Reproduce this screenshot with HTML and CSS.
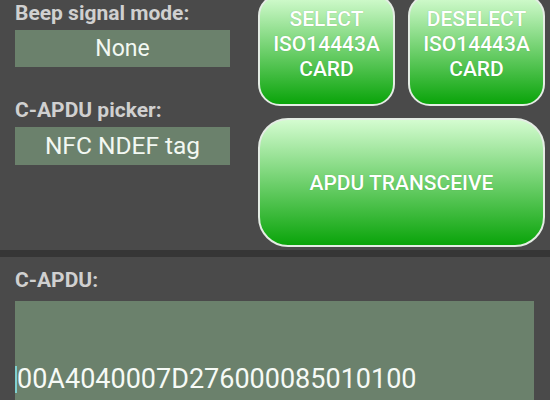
FILE: index.html
```html
<!DOCTYPE html>
<html lang="en">
<head>
  <meta charset="UTF-8">
  <title>APDU</title>
  <link rel="stylesheet" href="styles.css">
</head>
<body>

  <!-- parte de cima: modos + botoes -->
  <div class="top">
    <div class="left">
      <div class="label">Beep signal mode:</div>
      <div class="picker picker-beep">None</div>
      <div class="label label-second">C-APDU picker:</div>
      <div class="picker picker-apdu">NFC NDEF tag</div>
    </div>
    <div class="right">
      <button class="btn btn-small">SELECT<br>ISO14443A<br>CARD</button>
      <button class="btn btn-small">DESELECT<br>ISO14443A<br>CARD</button>
      <button class="btn btn-big">APDU TRANSCEIVE</button>
    </div>
  </div>

  <div class="divider"></div>

  <!-- parte de baixo: campo do comando -->
  <div class="bottom">
    <div class="label">C-APDU:</div>
    <div class="apdu-box">
      <span class="caret"></span>00A4040007D276000085010100
    </div>
  </div>

</body>
</html>
```

FILE: styles.css
```css
*,*::before,*::after{margin:0;padding:0;box-sizing:border-box}
html,body{
  width:100%;height:100%;
  overflow:hidden;
  background:#4a4a4a;
  font-family:Roboto,"Liberation Sans",sans-serif;
}

/* ===== TOPO ===== */
.top{
  display:flex;
  height:250px;
  overflow:hidden;
}
.left{
  width:215px;
  margin-left:15px;
}
.label{
  color:#d0d0d0;
  font-size:21px;
  font-weight:700;
  line-height:26px;
}
.label-second{margin-top:30px}
.picker{
  margin-top:4px;
  background:#6b816c;
  color:#f2f8f2;
  text-align:center;
  overflow:hidden;
}
.picker-beep{
  height:37px;
  font-size:23px;
  line-height:37px;
}
.picker-apdu{
  height:38px;
  font-size:24.5px;
  line-height:38px;
}

.right{
  margin-left:28px;
  width:287px;
  display:grid;
  grid-template-columns:1fr 1fr;
  column-gap:13px;
  row-gap:12px;
  align-content:start;
  margin-top:-6px;
}
.btn{
  border:2px solid #e4ece4;
  background:linear-gradient(#d4fcd0,#0aa40a);
  color:#fff;
  font-family:inherit;
  font-weight:500;
  text-shadow:0 0 1px rgba(0,80,0,.3);
}
.btn-small{
  height:112px;
  border-radius:22px;
  font-size:21px;
  line-height:25px;
  padding-bottom:12px;
}
.btn-big{
  grid-column:1 / 3;
  height:129px;
  border-radius:30px;
  font-size:21px;
}

.divider{
  height:7px;
  background:#363636;
}

/* ===== BAIXO ===== */
.bottom{
  padding:10px 16px 0 15px;
}
.apdu-box{
  margin-top:8px;
  height:99px;
  background:#6b816c;
  color:#f6faf6;
  font-size:27px;
  line-height:32px;
  padding:62px 0 0 0;
  white-space:nowrap;
  overflow:hidden;
}
.caret{
  display:inline-block;
  width:2px;
  height:27px;
  background:#7fd0d0;
  vertical-align:-5px;
}
```
